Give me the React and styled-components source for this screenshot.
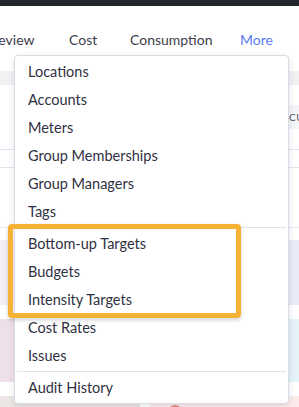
import React from 'react';
import styled, { createGlobalStyle } from 'styled-components';

const tabs = ['Review', 'Cost', 'Consumption', 'More'];

const menuGroups = [
  ['Locations', 'Accounts', 'Meters', 'Group Memberships', 'Group Managers', 'Tags'],
  ['Bottom-up Targets', 'Budgets', 'Intensity Targets', 'Cost Rates', 'Issues'],
  ['Audit History'],
];

const cards = [
  { left: '#f6eef6', right: '#eaebf9' },
  { left: '#efdfe8', right: '#e3f3f8' },
  { left: '#ebe6e3', right: '#fbeceb', dot: true },
];

const App = () => (
  <>
    <GlobalStyle />
    <StyledPage>
      <StyledTopBar />
      <StyledTabs>
        {tabs.map((tab) => (
          <StyledTab key={tab} active={tab === 'More'}>
            {tab}
          </StyledTab>
        ))}
      </StyledTabs>
      <StyledBand />
      <StyledHeader>
        <StyledPill>CURRENT</StyledPill>
      </StyledHeader>
      <StyledSubHeader />
      <StyledSpacer />
      <StyledCardGrid>
        {cards.map((card, i) => (
          <React.Fragment key={i}>
            <StyledCard tint={card.left} />
            <StyledCard tint={card.right}>{card.dot && <StyledDot />}</StyledCard>
          </React.Fragment>
        ))}
      </StyledCardGrid>

      <StyledMenu>
        {menuGroups.map((group, gi) => (
          <React.Fragment key={gi}>
            {gi > 0 && <StyledDivider />}
            {group.map((item) => (
              <StyledMenuItem key={item}>{item}</StyledMenuItem>
            ))}
          </React.Fragment>
        ))}
      </StyledMenu>
      <StyledHighlight />
    </StyledPage>
  </>
);

const GlobalStyle = createGlobalStyle`
  html, body {
    margin: 0;
    padding: 0;
    background: #fff;
  }
  body {
    font-family: Lato, 'Noto Sans', sans-serif;
    overflow: hidden;
  }
`;

const StyledPage = styled.div`
  position: relative;
  width: 299px;
  height: 407px;
  overflow: hidden;
  background: #fff;
`;

const StyledTopBar = styled.div`
  height: 6px;
  background: #25272f;
`;

const StyledTabs = styled.nav`
  display: grid;
  grid-template-columns: 79px 61px 110px auto;
  align-items: center;
  height: 65px;
  padding-top: 2px;
  box-sizing: border-box;
  margin-left: -10px;
  white-space: nowrap;
`;

const StyledTab = styled.span`
  font-size: 14px;
  color: ${(props) => (props.active ? '#5a7bef' : '#3b3d4b')};
`;

const StyledBand = styled.div`
  height: 14px;
  background: #f1f1f4;
`;

const StyledHeader = styled.div`
  display: flex;
  justify-content: flex-end;
  height: 65px;
  padding-top: 20px;
  box-sizing: border-box;
  border-bottom: 1px solid #dde1f2;
`;

const StyledPill = styled.div`
  width: 10px;
  height: 24px;
  padding-left: 21px;
  overflow: hidden;
  background: #f4f5f8;
  font-size: 10px;
  line-height: 24px;
  letter-spacing: 0.5px;
  color: #555766;
`;

const StyledSubHeader = styled.div`
  height: 17px;
  border-bottom: 1px solid #e3e3e8;
`;

const StyledSpacer = styled.div`
  height: 59px;
  border-bottom: 1px solid #e6e6ea;
`;

const StyledCardGrid = styled.div`
  display: grid;
  grid-template-columns: 140px 1fr;
  grid-template-rows: 65px 63px 60px;
  column-gap: 10px;
  row-gap: 14px;
  padding-top: 12px;
`;

const StyledCard = styled.div`
  background: ${(props) => props.tint};
  padding: 9px 18px;
`;

const StyledDot = styled.div`
  width: 14px;
  height: 14px;
  border-radius: 50%;
  background: #e58a84;
`;

const StyledMenu = styled.div`
  position: absolute;
  left: 14px;
  top: 55px;
  width: 275px;
  box-sizing: border-box;
  padding: 2px 0 1px;
  background: #fff;
  border: 1px solid #d9dce6;
  border-radius: 4px;
  box-shadow: 0 2px 6px rgba(30, 35, 60, 0.12);
`;

const StyledMenuItem = styled.div`
  height: 28px;
  line-height: 28px;
  padding-left: 13px;
  font-size: 14.5px;
  color: #2f3142;
  white-space: nowrap;
`;

const StyledDivider = styled.div`
  height: 1px;
  margin: 1px 2px 2px;
  background: #e2e3e8;
`;

const StyledHighlight = styled.div`
  position: absolute;
  left: 8px;
  top: 224px;
  width: 233px;
  height: 94px;
  box-sizing: border-box;
  border: 5px solid #f5b234;
  border-radius: 4px;
  box-shadow: 0 2px 4px rgba(0, 0, 0, 0.18);
`;

export default App;
